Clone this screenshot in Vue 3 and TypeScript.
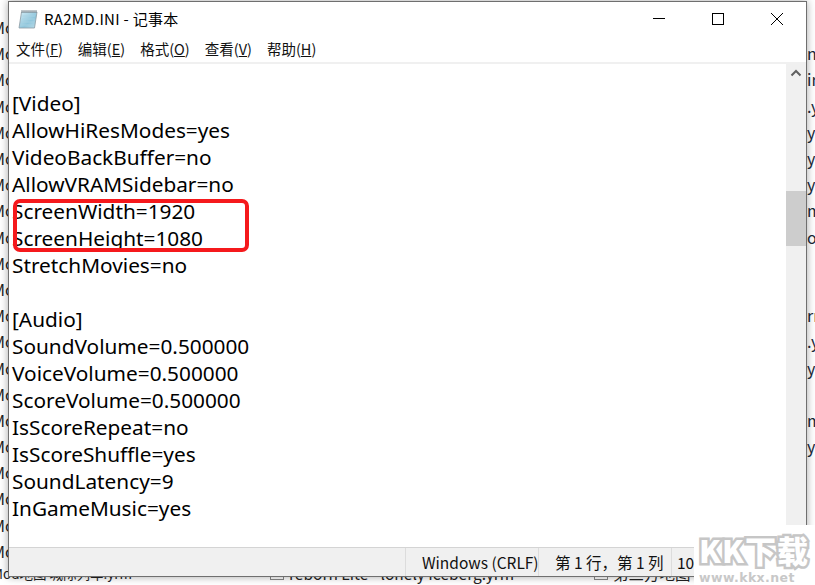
<script setup lang="ts">
interface Row { left: string; right: string }
const rightBits: string[] = ['', 'n.', 'ir', '.y', 'yr', 'yr', 'yr', 'm', 'or', '', '', 'rr', '.y', 'y', '', 'm', 'yr', '', '', '', '']
const rows: Row[] = rightBits.map((right: string) => ({ left: 'Mod', right }))
const lines: string[] = [
  '', '[Video]', 'AllowHiResModes=yes', 'VideoBackBuffer=no', 'AllowVRAMSidebar=no',
  'ScreenWidth=1920', 'ScreenHeight=1080', 'StretchMovies=no', '', '[Audio]',
  'SoundVolume=0.500000', 'VoiceVolume=0.500000', 'ScoreVolume=0.500000', 'IsScoreRepeat=no',
  'IsScoreShuffle=yes', 'SoundLatency=9', 'InGameMusic=yes'
]
const menus = [
  { name: '文件', key: 'F' }, { name: '编辑', key: 'E' }, { name: '格式', key: 'O' },
  { name: '查看', key: 'V' }, { name: '帮助', key: 'H' }
]
</script>

<template>
  <div class="page">
    <div class="desk">
      <div v-for="(r, i) in rows" :key="i" class="desk-row">
        <span>{{ r.left }}</span>
        <span class="bit">{{ r.right }}</span>
      </div>
      <div class="desk-last">
        <span class="f1">Mod地图 城际列车.yrm</span>
        <span class="file"><i class="box"></i>reborn Lite - lonely Iceberg.yrm</span>
        <span class="file"><i class="box"></i>第三方地图</span>
      </div>
    </div>

    <section class="win">
      <header class="title">
        <svg class="ico" width="20" height="20" viewBox="0 0 20 20">
          <defs>
            <linearGradient id="pad" x1="0" y1="0" x2="1" y2="1">
              <stop offset="0" stop-color="#d3ecf5" />
              <stop offset="0.6" stop-color="#8fc6dc" />
              <stop offset="1" stop-color="#bcdde9" />
            </linearGradient>
          </defs>
          <path d="M3.5 3 L19 3 L16.5 19 L1 19 Z" fill="url(#pad)" stroke="#8c9ba3" stroke-width="0.8" />
          <path d="M4 1 V4 M6 1 V4 M8 1 V4 M10 1 V4 M12 1 V4 M14 1 V4 M16 1 V4 M18 1 V4" stroke="#7f8c94" stroke-width="1" />
          <path d="M4.5 7 H17 M4 10 H16.5 M3.5 13 H16 M3 16 H15.5" stroke="#a9d2e2" stroke-width="0.8" />
        </svg>
        <span class="title-text">RA2MD.INI - 记事本</span>
        <div class="caps">
          <svg width="14" height="14" viewBox="0 0 14 14"><path d="M1 6.5H13" stroke="#000" fill="none" /></svg>
          <svg width="14" height="14" viewBox="0 0 14 14"><rect x="1.5" y="1.5" width="11" height="11" stroke="#000" fill="none" /></svg>
          <svg width="14" height="14" viewBox="0 0 14 14"><path d="M1 1L13 13M13 1L1 13" stroke="#000" fill="none" /></svg>
        </div>
      </header>

      <nav class="menu">
        <span v-for="m in menus" :key="m.key" class="menu-item">{{ m.name }}(<u>{{ m.key }}</u>)</span>
      </nav>

      <main class="body">
        <div class="editor">
          <div v-for="(l, i) in lines" :key="i" class="line">{{ l }}</div>
          <div class="mark"></div>
        </div>
        <aside class="scroll">
          <svg class="up" width="12" height="8" viewBox="0 0 12 8"><path d="M1.5 6.5L6 2L10.5 6.5" stroke="#606060" stroke-width="2" fill="none" /></svg>
          <div class="thumb"></div>
        </aside>
      </main>

      <footer class="status">
        <div class="cell c0"></div>
        <div class="cell c1">Windows (CRLF)</div>
        <div class="cell c2">第 1 行，第 1 列</div>
        <div class="cell c3">100%</div>
      </footer>
    </section>

    <div class="wm">
      <div class="wm-logo">KK下载</div>
      <div class="wm-url">www.kkx.net</div>
    </div>
  </div>
</template>

<style>
html, body { margin: 0; background: #fff; overflow: hidden; }
</style>

<style scoped>
.page {
  position: relative;
  width: 815px;
  height: 585px;
  overflow: hidden;
  background: #fff;
  font-family: "Noto Sans CJK SC", "Noto Sans", sans-serif;
}
.desk {
  display: flex;
  flex-direction: column;
  padding-top: 14px;
  margin-left: -8px;
  height: 585px;
  box-sizing: border-box;
  color: #222;
  font-size: 16px;
}
.desk-row {
  flex: 0 0 26.2px;
  display: flex;
  justify-content: space-between;
  align-items: center;
  line-height: 26px;
  overflow: hidden;
}
.bit { width: 8px; overflow: hidden; color: #1a2a3a; }
.desk-last {
  display: flex;
  align-items: center;
  line-height: 20px;
  white-space: nowrap;
  margin-top: -1px;
  font-size: 15.5px;
}
.f1 { width: 278px; flex: none; font-size: 13.5px; }
.file { width: 324px; flex: none; display: flex; align-items: center; gap: 5px; }
.box { width: 12px; height: 12px; border: 1px solid #888; display: block; }
.win {
  position: absolute;
  left: 8px;
  top: 1px;
  width: 799px;
  height: 576px;
  box-sizing: border-box;
  background: #fff;
  border: 1px solid #6f6f6f;
  box-shadow: 0 0 8px rgba(0, 0, 0, 0.35);
  display: flex;
  flex-direction: column;
}
.title {
  height: 33px;
  flex: none;
  display: flex;
  align-items: center;
  padding-left: 9px;
  color: #000;
}
.ico { flex: none; }
.title-text { margin-left: 6px; font-size: 15px; letter-spacing: 0.3px; }
.caps {
  margin-left: auto;
  display: flex;
  gap: 45px;
  padding-right: 22px;
  align-items: center;
}
.menu {
  height: 27px;
  flex: none;
  display: flex;
  align-items: center;
  gap: 15px;
  padding-left: 7px;
  font-size: 14.5px;
  color: #111;
  border-bottom: 2px solid #f0f0f0;
  box-sizing: content-box;
}
.menu-item { white-space: nowrap; }
.body {
  flex: 1;
  min-height: 0;
  display: flex;
}
.editor {
  position: relative;
  flex: 1;
  padding-left: 3px;
  margin-top: -1px;
  font-family: "Noto Sans", sans-serif;
  font-size: 20.8px;
  color: #000;
}
.line { height: 27px; line-height: 27px; white-space: pre; }
.mark {
  position: absolute;
  left: 4px;
  top: 136px;
  width: 228px;
  height: 45px;
  border: 4px solid #f5191c;
  border-radius: 7px;
}
.scroll {
  position: relative;
  width: 20px;
  flex: none;
  background: #f0f0f0;
  display: flex;
  flex-direction: column;
  align-items: center;
}
.up { margin-top: 5px; flex: none; }
.thumb {
  align-self: stretch;
  height: 55px;
  margin-top: 114px;
  background: #cdcdcd;
}
.status {
  height: 29px;
  flex: none;
  display: flex;
  background: #f0f0f0;
  border-top: 1px solid #d4d4d4;
  font-size: 15.5px;
  color: #111;
  box-sizing: border-box;
}
.cell {
  box-sizing: border-box;
  line-height: 28px;
  white-space: nowrap;
  border-right: 1px solid #dcdcdc;
}
.c0 { width: 397px; }
.c1 { width: 133px; padding-left: 16px; }
.c2 { width: 133px; padding-left: 16px; }
.c3 { flex: 1; padding-left: 5px; border-right: 0; }
.wm {
  position: absolute;
  left: 694px;
  top: 525px;
  width: 121px;
  height: 60px;
  background: #fff;
  padding-left: 5px;
  box-sizing: border-box;
}
.wm-logo {
  font-family: "Noto Sans CJK SC", sans-serif;
  font-weight: 900;
  font-size: 31px;
  line-height: 40px;
  margin-top: 5px;
  letter-spacing: 1px;
  color: #fff;
  -webkit-text-stroke: 5px #c6c6c6;
  paint-order: stroke fill;
  white-space: nowrap;
}
.wm-url {
  font-family: "DejaVu Sans", sans-serif;
  font-weight: 700;
  font-size: 12.5px;
  line-height: 16px;
  letter-spacing: 0.4px;
  color: #c8c8c8;
}
</style>
